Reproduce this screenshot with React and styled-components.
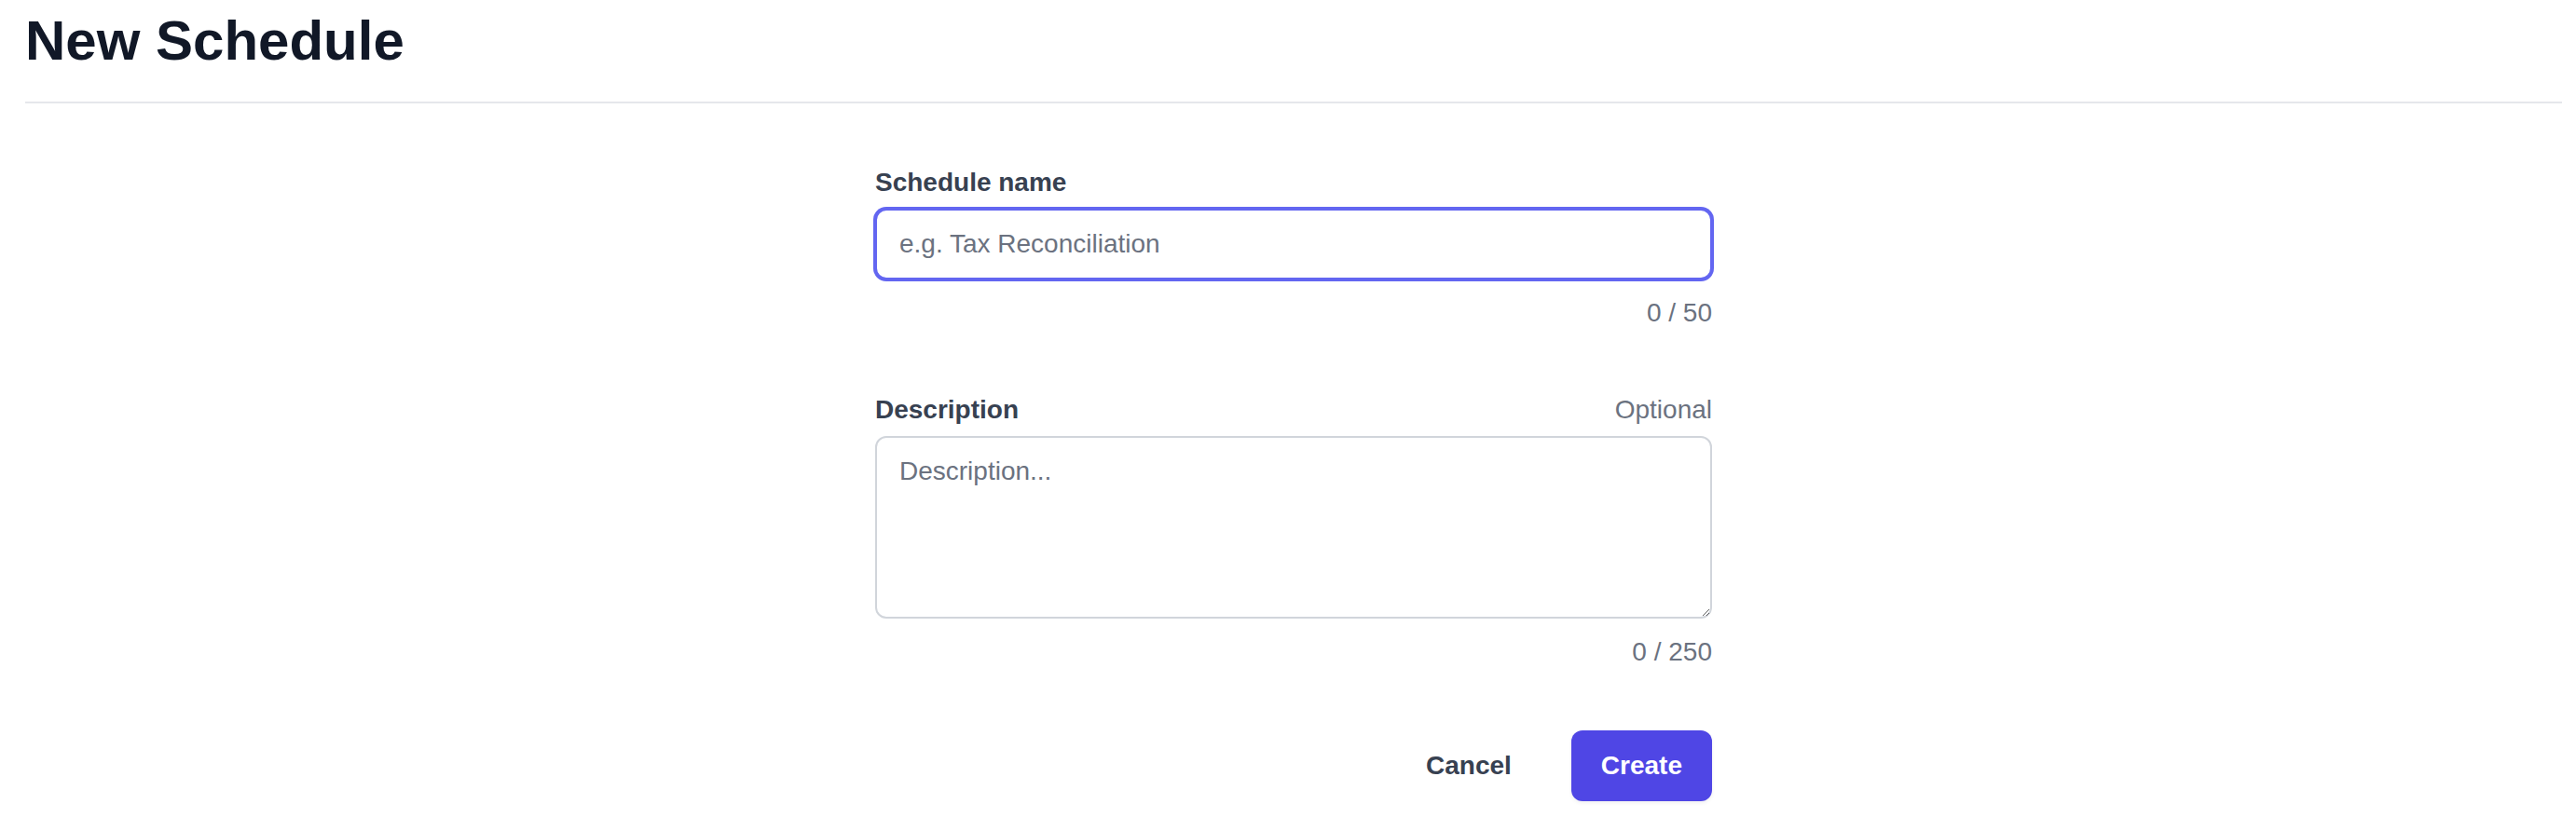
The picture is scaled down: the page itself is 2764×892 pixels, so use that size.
import React, { useState } from 'react';
import styled, { createGlobalStyle } from 'styled-components';

const GlobalStyle = createGlobalStyle`
  html, body {
    margin: 0;
    padding: 0;
    background: #ffffff;
    font-family: "Liberation Sans", Arial, Helvetica, sans-serif;
  }
`;

const Page = styled.div`
  min-height: 892px;
  padding: 0 15px 0 27px;
  box-sizing: border-box;
`;

const Header = styled.header`
  padding: 8px 0 29px;
  border-bottom: 2px solid #e5e7eb;
`;

const Title = styled.h1`
  margin: 0;
  font-size: 60px;
  line-height: 72px;
  font-weight: 700;
  color: #111827;
`;

const Form = styled.form`
  width: 898px;
  margin: 65px auto 0;
  display: flex;
  flex-direction: column;
`;

const Field = styled.div`
  display: flex;
  flex-direction: column;
  margin-bottom: ${(p) => p.$spacing || 0}px;
`;

const LabelRow = styled.div`
  display: flex;
  justify-content: space-between;
  align-items: baseline;
  margin-bottom: 8px;
`;

const Label = styled.label`
  font-size: 28px;
  line-height: 40px;
  font-weight: 700;
  color: #374151;
`;

const Hint = styled.span`
  font-size: 28px;
  line-height: 40px;
  color: #6b7280;
`;

const TextInput = styled.input`
  box-sizing: border-box;
  width: 100%;
  height: 76px;
  padding: 0 24px;
  font-family: inherit;
  font-size: 28px;
  color: #111827;
  caret-color: #111827;
  border: 2px solid #6366f1;
  border-radius: 12px;
  box-shadow: 0 0 0 2px #6366f1;
  outline: none;

  &::placeholder {
    color: #6b7280;
  }
`;

const TextArea = styled.textarea`
  box-sizing: border-box;
  width: 100%;
  height: 196px;
  padding: 16px 24px;
  font-family: inherit;
  font-size: 28px;
  line-height: 40px;
  color: #111827;
  border: 2px solid #d1d5db;
  border-radius: 12px;
  outline: none;

  &::placeholder {
    color: #6b7280;
  }
`;

const Counter = styled.div`
  margin-top: 16px;
  text-align: right;
  font-size: 28px;
  line-height: 40px;
  color: #6b7280;
`;

const Actions = styled.div`
  display: flex;
  justify-content: flex-end;
  gap: 32px;
`;

const Button = styled.button`
  height: 76px;
  padding: 0 32px;
  font-family: inherit;
  font-size: 28px;
  font-weight: 700;
  border: none;
  border-radius: 12px;
  cursor: pointer;
  background: ${(p) => (p.$primary ? '#4f46e5' : 'transparent')};
  color: ${(p) => (p.$primary ? '#ffffff' : '#374151')};
  box-shadow: ${(p) => (p.$primary ? '0 2px 4px rgba(0, 0, 0, 0.06)' : 'none')};
`;

const App = () => {
  const [name, setName] = useState('');
  const [description, setDescription] = useState('');

  return (
    <>
      <GlobalStyle />
      <Page>
        <Header>
          <Title>New Schedule</Title>
        </Header>

        <Form onSubmit={(e) => e.preventDefault()}>
          <Field $spacing={64}>
            <LabelRow>
              <Label htmlFor="schedule-name">Schedule name</Label>
            </LabelRow>
            <TextInput
              id="schedule-name"
              autoFocus
              maxLength={50}
              placeholder="e.g. Tax Reconciliation"
              value={name}
              onChange={(e) => setName(e.target.value)}
            />
            <Counter>{name.length} / 50</Counter>
          </Field>

          <Field $spacing={64}>
            <LabelRow>
              <Label htmlFor="schedule-description">Description</Label>
              <Hint>Optional</Hint>
            </LabelRow>
            <TextArea
              id="schedule-description"
              maxLength={250}
              placeholder="Description..."
              value={description}
              onChange={(e) => setDescription(e.target.value)}
            />
            <Counter>{description.length} / 250</Counter>
          </Field>

          <Actions>
            <Button type="button">Cancel</Button>
            <Button type="submit" $primary>Create</Button>
          </Actions>
        </Form>
      </Page>
    </>
  );
};

export default App;
